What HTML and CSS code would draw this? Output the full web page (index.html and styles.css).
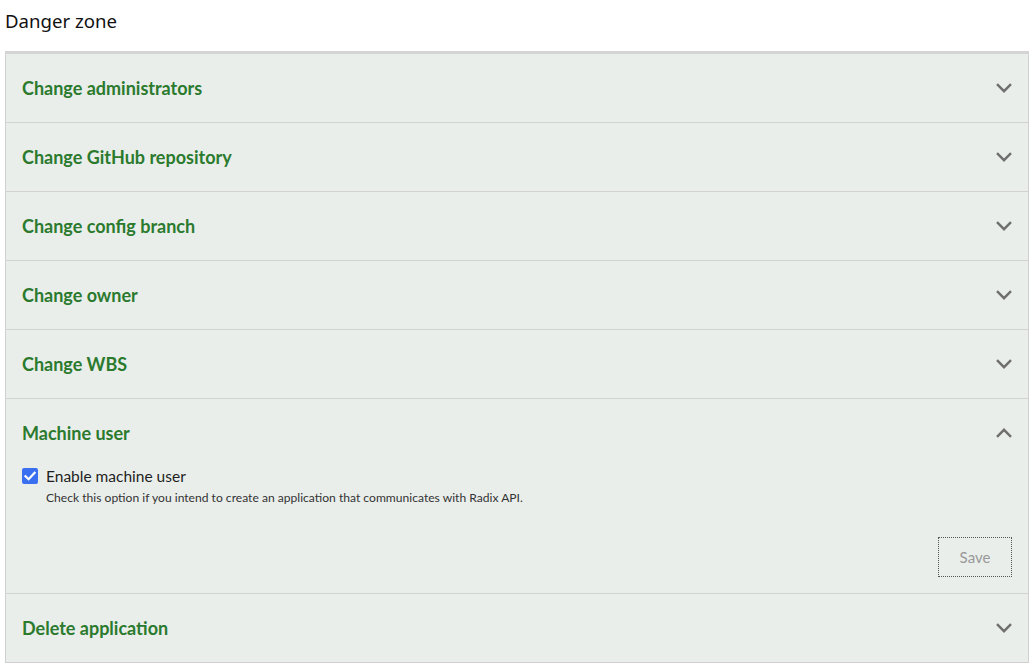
FILE: index.html
```html
<!DOCTYPE html>
<html>
<head>
<meta charset="utf-8">
<link rel="stylesheet" href="styles.css">
</head>
<body>
<h2 class="page-title">Danger zone</h2>
<div class="accordion">
  <div class="item">
    <div class="item-header"><span class="item-title">Change administrators</span>
      <svg class="chev" viewBox="0 0 16 10" width="16" height="10"><path d="M1 1.2 8 8.2 15 1.2"/></svg></div>
  </div>
  <div class="item">
    <div class="item-header"><span class="item-title">Change GitHub repository</span>
      <svg class="chev" viewBox="0 0 16 10" width="16" height="10"><path d="M1 1.2 8 8.2 15 1.2"/></svg></div>
  </div>
  <div class="item">
    <div class="item-header"><span class="item-title">Change config branch</span>
      <svg class="chev" viewBox="0 0 16 10" width="16" height="10"><path d="M1 1.2 8 8.2 15 1.2"/></svg></div>
  </div>
  <div class="item">
    <div class="item-header"><span class="item-title">Change owner</span>
      <svg class="chev" viewBox="0 0 16 10" width="16" height="10"><path d="M1 1.2 8 8.2 15 1.2"/></svg></div>
  </div>
  <div class="item">
    <div class="item-header"><span class="item-title">Change WBS</span>
      <svg class="chev" viewBox="0 0 16 10" width="16" height="10"><path d="M1 1.2 8 8.2 15 1.2"/></svg></div>
  </div>
  <div class="item open">
    <div class="item-header"><span class="item-title">Machine user</span>
      <svg class="chev" viewBox="0 0 16 10" width="16" height="10"><path d="M1 8.8 8 1.8 15 8.8"/></svg></div>
    <div class="item-body">
      <label class="check">
        <span class="box"><svg viewBox="0 0 16 16" width="16" height="16"><path d="M3.5 8.2 6.6 11.2 12.6 4.8" fill="none" stroke="#fff" stroke-width="2.2" stroke-linecap="square"/></svg></span>
        <span class="check-text">
          <span class="check-label">Enable machine user</span>
          <span class="check-help">Check this option if you intend to create an application that communicates with Radix API.</span>
        </span>
      </label>
      <div class="actions"><button class="save" disabled>Save</button></div>
    </div>
  </div>
  <div class="item">
    <div class="item-header"><span class="item-title">Delete application</span>
      <svg class="chev" viewBox="0 0 16 10" width="16" height="10"><path d="M1 1.2 8 8.2 15 1.2"/></svg></div>
  </div>
</div>
</body>
</html>
```

FILE: styles.css
```css
html, body {
  margin: 0;
  padding: 0;
  background: #ffffff;
}
body {
  padding: 0 4px 0 5px;
  font-family: Lato, "Noto Sans", sans-serif;
  color: #1e1e1e;
}
.page-title {
  margin: 0;
  padding-top: 9px;
  height: 51px;
  box-sizing: border-box;
  font-family: "Noto Sans", sans-serif;
  font-weight: 400;
  font-size: 18.6px;
  line-height: 24px;
  color: #111;
}
.accordion {
  border-top: 3px solid #d4d4d4;
  border-left: 1px solid #d0d0d0;
  border-right: 1px solid #d0d0d0;
  border-bottom: 1px solid #d0d0d0;
  background: #eaeeeb;
}
.item {
  border-bottom: 1px solid #d2d2d2;
}
.item:last-child {
  border-bottom: none;
}
.item-header {
  height: 68px;
  display: flex;
  align-items: center;
  justify-content: space-between;
  padding: 0 16px 0 16px;
}
.item-title {
  font-family: Lato, sans-serif;
  font-weight: 700;
  font-size: 18px;
  color: #2b7a2e;
}
.chev {
  fill: none;
  stroke: #6f6f6f;
  stroke-width: 2.4;
}
.item-body {
  padding: 0 16px 16px 16px;
}
.check {
  display: flex;
  align-items: flex-start;
  gap: 8px;
  margin-top: 1px;
}
.box {
  width: 16px;
  height: 16px;
  border-radius: 2px;
  background: #3a6ff0;
  display: flex;
  flex-shrink: 0;
}
.check-text {
  display: flex;
  flex-direction: column;
}
.check-label {
  font-family: Lato, sans-serif;
  font-size: 15.5px;
  line-height: 17px;
  color: #1e1e1e;
}
.check-help {
  font-family: Lato, sans-serif;
  font-size: 12.1px;
  line-height: 14px;
  margin-top: 6px;
  color: #333;
}
.actions {
  display: flex;
  justify-content: flex-end;
  margin-top: 32px;
}
.save {
  width: 74px;
  height: 40px;
  background: transparent;
  border: 1px dotted #555;
  font-family: Lato, sans-serif;
  font-size: 15px;
  color: #999;
  padding: 0;
}
```
